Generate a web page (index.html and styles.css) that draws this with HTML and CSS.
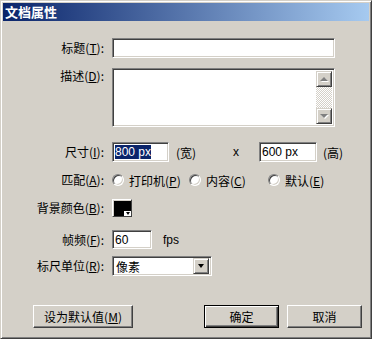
FILE: index.html
```html
<!DOCTYPE html>
<html lang="zh-CN">
<head>
<meta charset="utf-8">
<title>文档属性</title>
<link rel="stylesheet" href="styles.css">
</head>
<body>
<div class="window">
  <div class="titlebar">文档属性</div>
  <div class="form">
    <div class="row row-title">
      <label class="label">标题(<u>T</u>):</label>
      <div class="field w-title"></div>
    </div>
    <div class="row row-desc">
      <label class="label label-top">描述(<u>D</u>):</label>
      <div class="field textarea">
        <div class="ta-body"></div>
        <div class="scrollbar">
          <div class="sb-btn"><span class="arr-up"></span></div>
          <div class="sb-track"></div>
          <div class="sb-btn"><span class="arr-down"></span></div>
        </div>
      </div>
    </div>
    <div class="row row-size">
      <label class="label">尺寸(<u>I</u>):</label>
      <div class="field w-size"><span class="sel">800 px</span></div>
      <span class="unit-w">(宽)</span>
      <span class="times">x</span>
      <div class="field w-size2"><span class="val">600 px</span></div>
      <span class="unit-h">(高)</span>
    </div>
    <div class="row row-radio">
      <label class="label">匹配(<u>A</u>):</label>
      <div class="radio-item ri-1"><span class="radio"></span><span class="rtext">打印机(<u>P</u>)</span></div>
      <div class="radio-item ri-2"><span class="radio"></span><span class="rtext">内容(<u>C</u>)</span></div>
      <div class="radio-item"><span class="radio"></span><span class="rtext">默认(<u>E</u>)</span></div>
    </div>
    <div class="row row-color">
      <label class="label">背景颜色(<u>B</u>):</label>
      <div class="swatch"><span class="swatch-arrow"></span></div>
    </div>
    <div class="row row-fps">
      <label class="label">帧频(<u>F</u>):</label>
      <div class="field w-fps"><span class="val">60</span></div>
      <span class="fps">fps</span>
    </div>
    <div class="row row-ruler">
      <label class="label">标尺单位(<u>R</u>):</label>
      <div class="field select">
        <span class="sel-text">像素</span>
        <span class="dd-btn"><span class="arr-down black"></span></span>
      </div>
    </div>
    <div class="buttons">
      <button class="btn btn-default-set">设为默认值(<u>M</u>)</button>
      <button class="btn btn-ok">确定</button>
      <button class="btn btn-cancel">取消</button>
    </div>
  </div>
</div>
</body>
</html>
```
FILE: styles.css
```css
* { box-sizing: border-box; }
html, body { margin: 0; padding: 0; background: #d4d0c8; }
body {
  font-family: "Noto Sans CJK SC", "Liberation Sans", sans-serif;
  font-size: 12px;
  color: #000;
}
.window {
  width: 372px;
  height: 339px;
  background: #d4d0c8;
  border: 1px solid;
  border-color: #d4d0c8 #404040 #404040 #d4d0c8;
  box-shadow: inset 1px 1px #fff, inset -1px -1px #808080;
  padding: 2px;
  display: flex;
  flex-direction: column;
}
.titlebar {
  height: 18px;
  background: linear-gradient(to right, #0a246a, #a6caf0);
  color: #fff;
  font-weight: bold;
  font-size: 13px;
  line-height: 18px;
  padding-left: 2px;
}
.form { display: flex; flex-direction: column; }
.row { display: flex; align-items: center; }
.label {
  width: 101px;
  margin-right: 8px;
  text-align: right;
  white-space: nowrap;
  line-height: 14px;
}
.label-top { align-self: flex-start; margin-top: 1px; }
u { text-decoration: underline; text-underline-offset: 1px; }

.row-title { margin-top: 17px; height: 20px; }
.row-desc { margin-top: 10px; height: 59px; align-items: flex-start; }
.row-size { margin-top: 15px; height: 20px; }
.row-radio { margin-top: 9px; height: 18px; }
.row-color { margin-top: 10px; height: 18px; }
.row-fps { margin-top: 13px; height: 19px; }
.row-ruler { margin-top: 7px; height: 20px; }

.field {
  background: #fff;
  border: 1px solid;
  border-color: #808080 #fff #fff #808080;
  box-shadow: inset 1px 1px #404040, inset -1px -1px #d4d0c8;
  height: 100%;
  display: flex;
  align-items: center;
  padding: 2px;
  font-family: "Liberation Sans", "Noto Sans CJK SC", sans-serif;
  font-size: 12px;
}
.w-title { width: 223px; }
.textarea { width: 223px; padding: 2px; align-items: stretch; }
.ta-body { flex: 1; }
.scrollbar { width: 16px; display: flex; flex-direction: column; }
.sb-btn {
  width: 16px; height: 16px;
  background: #d4d0c8;
  border: 1px solid;
  border-color: #d4d0c8 #404040 #404040 #d4d0c8;
  box-shadow: inset 1px 1px #fff, inset -1px -1px #808080;
  display: flex; align-items: center; justify-content: center;
}
.sb-track {
  flex: 1;
  background: repeating-conic-gradient(#fff 0 25%, #d4d0c8 0 50%) 0 0 / 2px 2px;
}
.arr-up, .arr-down {
  width: 0; height: 0;
  border-left: 4px solid transparent;
  border-right: 4px solid transparent;
}
.arr-up { border-bottom: 4px solid #808080; filter: drop-shadow(1px 1px 0 #fff); }
.arr-down { border-top: 4px solid #808080; filter: drop-shadow(1px 1px 0 #fff); }
.arr-down.black { border-top-color: #000; filter: none; border-left-width: 3.5px; border-right-width: 3.5px; }

.w-size { width: 57px; }
.w-size2 { width: 58px; }
.sel { background: #0a246a; color: #fff; line-height: 14px; }
.val { line-height: 14px; }
.unit-w { width: 64px; padding-left: 7px; }
.times { width: 26px; font-family: "Liberation Sans", sans-serif; font-size: 12px; }
.unit-h { padding-left: 6px; }

.radio-item { display: flex; align-items: center; }
.ri-1 { width: 77px; }
.ri-2 { width: 79px; }
.radio {
  width: 12px; height: 12px;
  border-radius: 50%;
  background: #fff;
  border: 1px solid;
  border-color: #808080 #fff #fff #808080;
  box-shadow: inset 1px 1px #404040, inset -1px -1px #d4d0c8;
}
.rtext { margin-left: 5px; white-space: nowrap; }

.swatch {
  position: relative;
  width: 20px; height: 18px;
  background: #000;
  border: 1px solid;
  border-color: #fff #404040 #404040 #fff;
  box-shadow: inset 1px 1px #d4d0c8;
}
.swatch-arrow {
  position: absolute;
  right: 0; bottom: 0;
  width: 7px; height: 5px;
  background: #fff;
  display: flex; justify-content: center; align-items: center;
}
.swatch-arrow::after {
  content: "";
  border-left: 2.5px solid transparent;
  border-right: 2.5px solid transparent;
  border-top: 3px solid #000;
}

.w-fps { width: 40px; }
.fps { margin-left: 11px; font-family: "Liberation Sans", sans-serif; font-size: 12px; }

.select { width: 100px; padding: 2px; justify-content: space-between; }
.sel-text { font-family: "Noto Sans CJK SC", sans-serif; font-size: 12px; padding-left: 1px; }
.dd-btn {
  width: 16px; height: 16px;
  background: #d4d0c8;
  border: 1px solid;
  border-color: #d4d0c8 #404040 #404040 #d4d0c8;
  box-shadow: inset 1px 1px #fff, inset -1px -1px #808080;
  display: flex; align-items: center; justify-content: center;
}

.buttons {
  display: flex;
  margin-top: 29px;
  padding-right: 7px;
  gap: 8px;
}
.btn {
  font-family: "Noto Sans CJK SC", sans-serif;
  font-size: 12px;
  height: 23px;
  background: #d4d0c8;
  border: 1px solid;
  border-color: #fff #404040 #404040 #fff;
  box-shadow: inset -1px -1px #808080;
  padding: 0;
  color: #000;
}
.btn-default-set { width: 100px; margin-left: 30px; }
.btn-ok {
  width: 75px;
  margin-left: auto;
  border-color: #000;
  box-shadow: inset 1px 1px #fff, inset -1px -1px #404040, inset -2px -2px #808080;
}
.btn-cancel { width: 75px; }
```
